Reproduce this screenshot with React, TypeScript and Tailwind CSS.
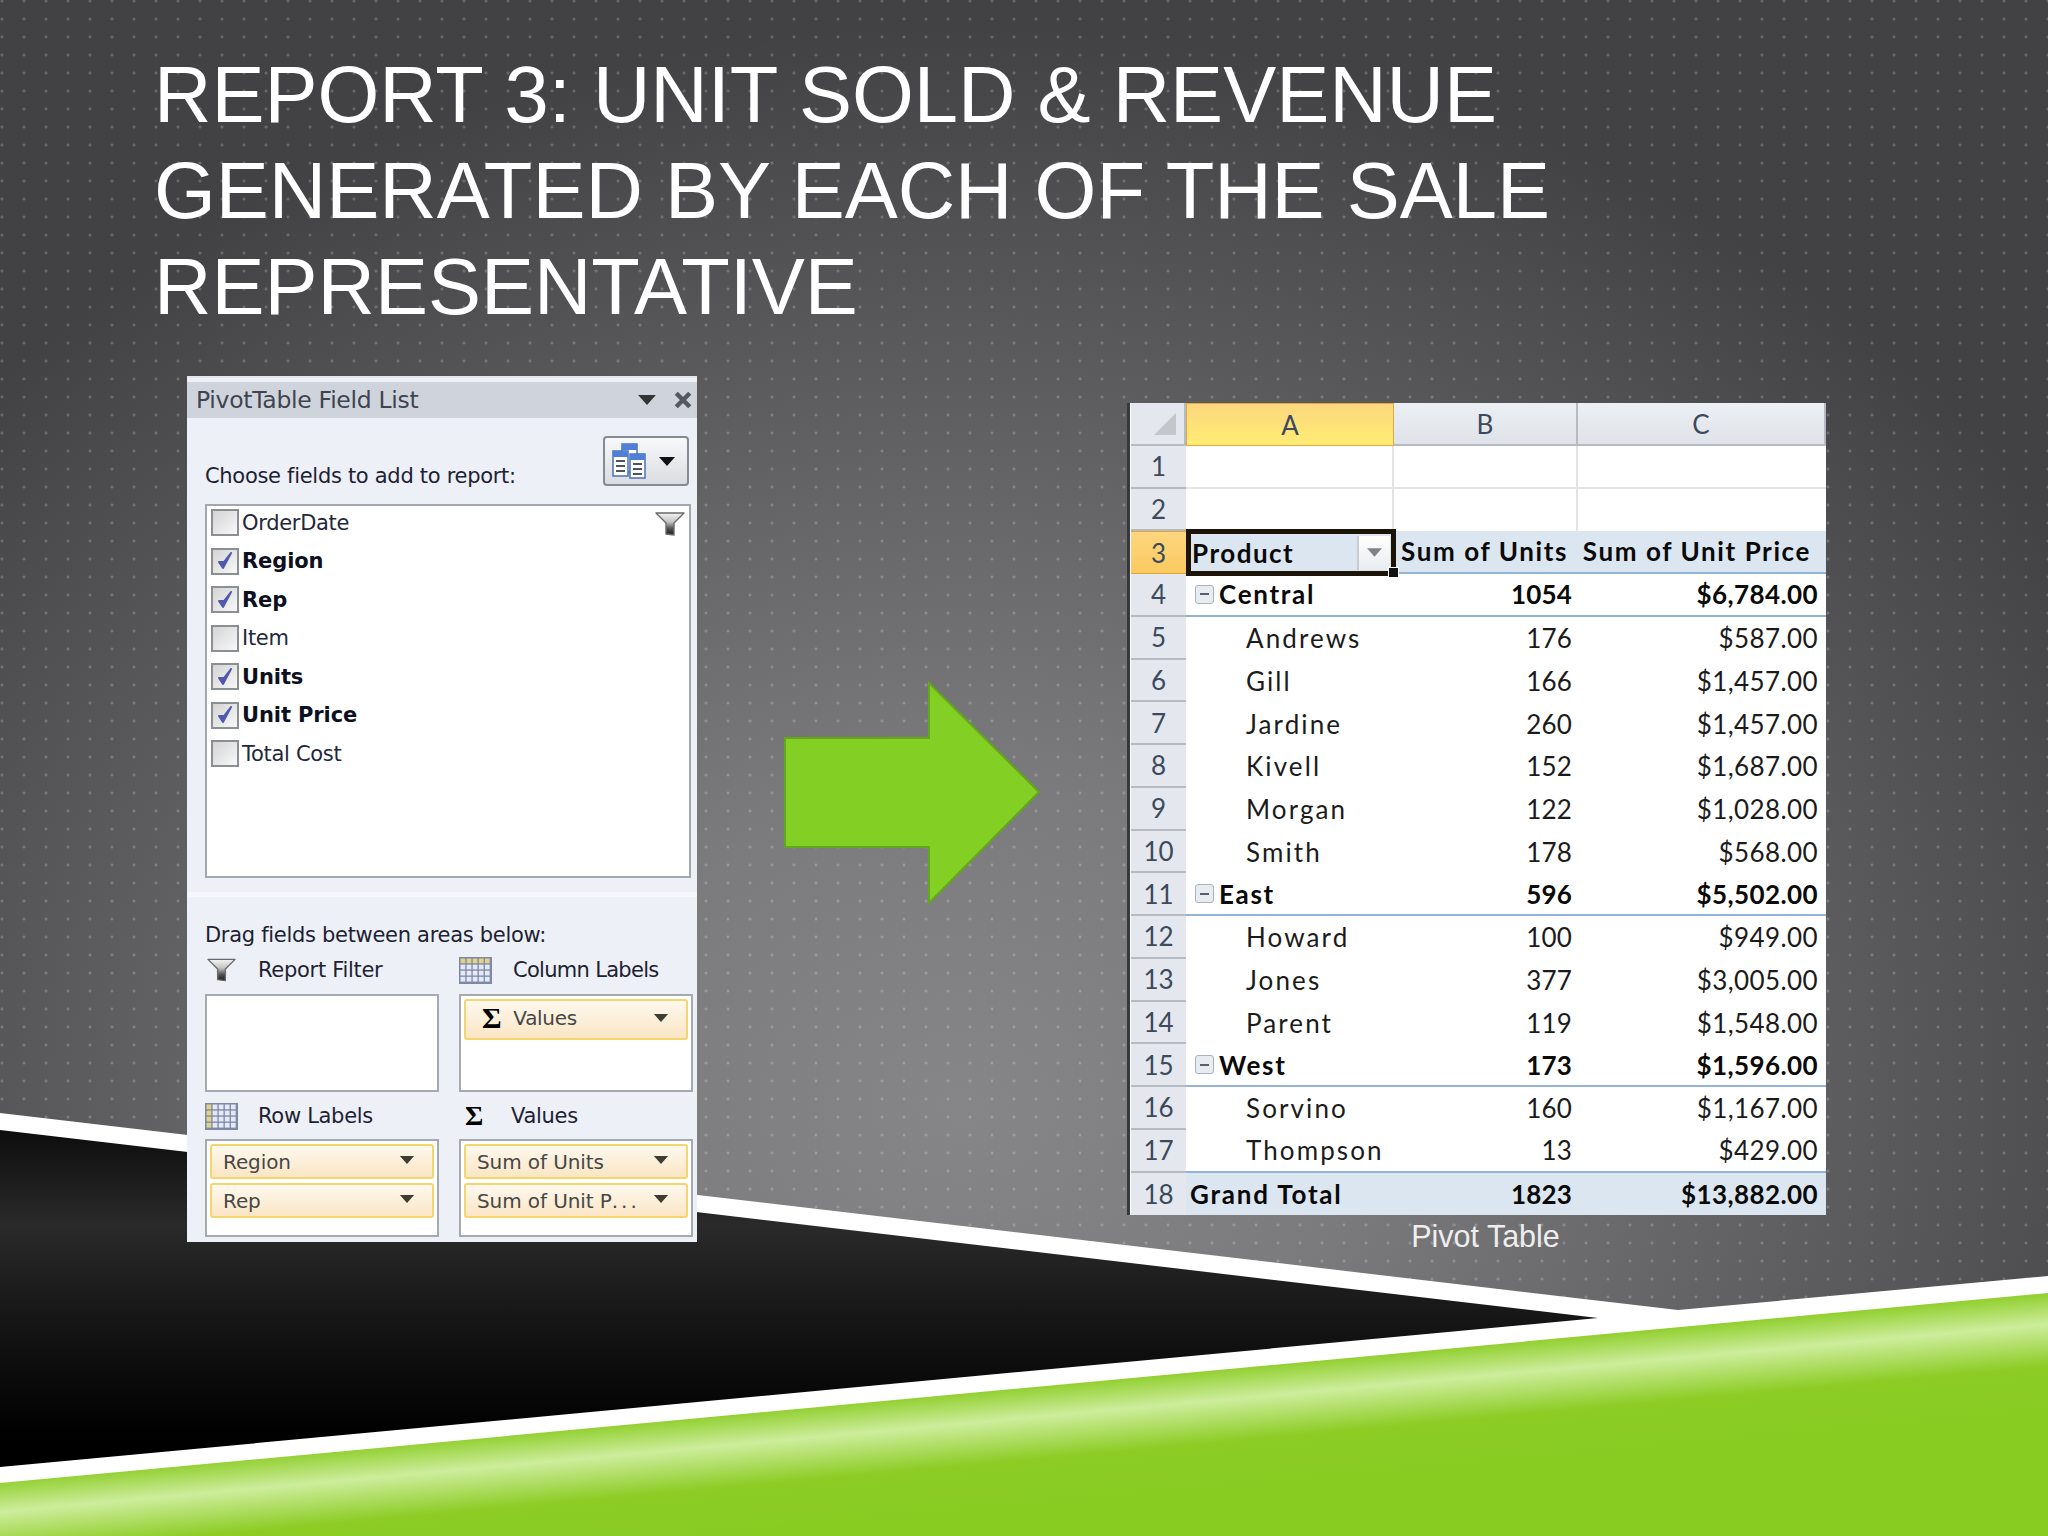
const rows = [
  { n: 4, label: 'Central', units: '1054', price: '$6,784.00', group: true },
  { n: 5, label: 'Andrews', units: '176', price: '$587.00' },
  { n: 6, label: 'Gill', units: '166', price: '$1,457.00' },
  { n: 7, label: 'Jardine', units: '260', price: '$1,457.00' },
  { n: 8, label: 'Kivell', units: '152', price: '$1,687.00' },
  { n: 9, label: 'Morgan', units: '122', price: '$1,028.00' },
  { n: 10, label: 'Smith', units: '178', price: '$568.00' },
  { n: 11, label: 'East', units: '596', price: '$5,502.00', group: true },
  { n: 12, label: 'Howard', units: '100', price: '$949.00' },
  { n: 13, label: 'Jones', units: '377', price: '$3,005.00' },
  { n: 14, label: 'Parent', units: '119', price: '$1,548.00' },
  { n: 15, label: 'West', units: '173', price: '$1,596.00', group: true },
  { n: 16, label: 'Sorvino', units: '160', price: '$1,167.00' },
  { n: 17, label: 'Thompson', units: '13', price: '$429.00' },
]

const fields = [
  { name: 'OrderDate', on: false },
  { name: 'Region', on: true },
  { name: 'Rep', on: true },
  { name: 'Item', on: false },
  { name: 'Units', on: true },
  { name: 'Unit Price', on: true },
  { name: 'Total Cost', on: false },
]

function Funnel({ className }: { className: string }) {
  return (
    <svg viewBox="0 0 30 24" className={className}>
      <defs>
        <linearGradient id="funnel" x1="0" x2="0" y1="0" y2="1">
          <stop offset="0" stopColor="#f4f4f4" />
          <stop offset="0.4" stopColor="#c4c4c4" />
          <stop offset="0.7" stopColor="#555" />
          <stop offset="1" stopColor="#1c1c1c" />
        </linearGradient>
      </defs>
      <path d="M1 1h28L19 11v12l-8 -1v-11z" fill="url(#funnel)" stroke="#6a6a6a" strokeWidth="1.4" strokeLinejoin="round" />
    </svg>
  )
}

function GridIcon({ className, rowHead }: { className: string; rowHead?: boolean }) {
  const cells = []
  for (let r = 0; r < 4; r++) {
    for (let c = 0; c < 5; c++) {
      const head = rowHead ? c === 0 : r === 0
      cells.push(
        <rect key={`${r}-${c}`} x={1.5 + c * 6.1} y={1.5 + r * 6.1} width="4.8" height="4.8" fill={head ? '#e2d28a' : '#e3e9f8'} />
      )
    }
  }
  return (
    <svg viewBox="0 0 33 27" className={className}>
      <rect x="0" y="0" width="33" height="27" fill="#7d88a3" />
      {cells}
    </svg>
  )
}

function Caret({ className = 'w-[16px] h-[9px]', color = '#3d3d33' }: { className?: string; color?: string }) {
  return (
    <svg viewBox="0 0 16 9" className={className}>
      <path d="M0 0h16L8 9z" fill={color} />
    </svg>
  )
}

function Check({ on }: { on: boolean }) {
  return (
    <span className="relative flex h-[27px] w-[28px] shrink-0 items-center justify-center border-2 border-[#8b8f93] bg-gradient-to-br from-[#d4d4d4] to-[#f8f8f8]">
      {on && (
        <svg viewBox="0 0 20 20" className="h-[20px] w-[20px]">
          <path d="M4 11l4 6 8-15-7 9z" fill="#5059ad" stroke="#5059ad" strokeWidth="2" strokeLinejoin="round" />
        </svg>
      )}
    </span>
  )
}

function Chip({ children }: { children: React.ReactNode }) {
  return (
    <div className="flex h-[35px] items-center justify-between rounded-[3px] border-2 border-[#f3d66e] bg-gradient-to-b from-[#fdf8ee] to-[#fbe6c4] pl-[11px] pr-[17px] text-[20px] tracking-[-0.1px] text-[#474747]">
      <span className="whitespace-nowrap">{children}</span>
      <Caret className="mb-[3px] h-[8px] w-[16px]" />
    </div>
  )
}

function AreaBox({ children }: { children?: React.ReactNode }) {
  return (
    <div className="flex h-[98px] w-[234px] flex-col gap-[4px] border-2 border-[#a6a9ae] bg-white p-[3px]">{children}</div>
  )
}

function FieldList() {
  return (
    <div className="relative flex h-[866px] w-[510px] shrink-0 flex-col border-t-[2px] border-[#e4e6ea] bg-[#edf0f6] font-['DejaVu_Sans',sans-serif] text-[21px] tracking-[-0.3px] text-[#1d2233]">
      <div className="mt-[4px] flex h-[36px] items-center justify-between bg-[#cfd4dc] pl-[9px] pr-[5px] text-[#3f4450]">
        <span className="mt-[2px] text-[23.5px]">PivotTable Field List</span>
        <div className="flex items-center gap-[17px]">
          <Caret className="h-[10px] w-[20px]" color="#333" />
          <svg viewBox="0 0 16 16" className="h-[18px] w-[18px]">
            <path d="M2 2l12 12M14 2L2 14" stroke="#55595f" strokeWidth="4" />
          </svg>
        </div>
      </div>

      <div className="flex h-[86px] items-start justify-between pl-[18px] pr-[8px] pt-[18px]">
        <span className="mt-[26px] leading-[28px]">Choose fields to add to report:</span>
        <div className="flex h-[50px] w-[86px] items-center gap-[13px] rounded-[4px] border-2 border-[#858b92] bg-gradient-to-b from-[#f8f9fb] to-[#d9dce0] pl-[7px]">
          <svg viewBox="0 0 34 36" className="h-[36px] w-[34px]">
            <rect x="10" y="1" width="15" height="28" fill="#fff" stroke="#4a70b8" strokeWidth="1.5" />
            <rect x="10" y="1" width="15" height="6" fill="#4f7fd8" />
            <rect x="1" y="8" width="15" height="25" fill="#fff" stroke="#4a70b8" strokeWidth="1.5" />
            <rect x="1" y="8" width="15" height="6" fill="#4f7fd8" />
            <rect x="18" y="11" width="15" height="24" fill="#fff" stroke="#4a70b8" strokeWidth="1.5" />
            <rect x="18" y="11" width="15" height="6" fill="#4f7fd8" />
            <path d="M4 18h9M4 23h9M4 28h9M21 21h9M21 26h9M21 31h9" stroke="#4d5560" strokeWidth="2" />
          </svg>
          <Caret className="h-[9px] w-[16px]" color="#111" />
        </div>
      </div>

      <div className="relative mx-[18px] h-[374px] w-[486px] border-2 border-[#a3a8ae] bg-white pl-[4px] pt-[3px] text-[#23283a]">
        <Funnel className="absolute right-[4px] top-[6px] h-[24px] w-[30px]" />
        <div className="flex flex-col gap-[11.5px]">
          {fields.map((f) => (
            <div key={f.name} className="flex h-[27px] items-center gap-[3px]">
              <Check on={f.on} />
              <span className={f.on ? 'mt-[2px] font-bold tracking-[-0.1px] text-[#0c1020]' : 'mt-[2px]'}>{f.name}</span>
            </div>
          ))}
        </div>
      </div>

      <div className="mt-[14px] h-[5px] bg-[#f6f7fa]" />

      <div className="flex flex-1 flex-col pl-[18px]">
        <p className="mt-[25px] leading-[26px]">Drag fields between areas below:</p>
        <div className="mt-[8px] grid w-[488px] grid-cols-[234px_234px] gap-x-[20px]">
          <div className="flex h-[28px] items-center gap-[22px] pl-[2px]">
            <Funnel className="h-[24px] w-[29px]" />
            <span className="mt-[2px]">Report Filter</span>
          </div>
          <div className="flex h-[28px] items-center gap-[21px]">
            <GridIcon className="h-[27px] w-[33px]" />
            <span className="mt-[2px] tracking-[-0.7px]">Column Labels</span>
          </div>
          <div className="mt-[10px]">
            <AreaBox />
          </div>
          <div className="mt-[10px]">
            <AreaBox>
              <div className="flex h-[41px] items-center justify-between rounded-[3px] border-2 border-[#f3d66e] bg-gradient-to-b from-[#fdf8ee] to-[#fbe6c4] pb-[4px] pr-[17px] text-[20px] text-[#474747]">
                <span className="flex items-center">
                  <span className="ml-[16px] font-['Liberation_Serif',serif] text-[30px] font-bold leading-none text-black">Σ</span>
                  <span className="ml-[12px]">Values</span>
                </span>
                <Caret className="h-[8px] w-[16px]" />
              </div>
            </AreaBox>
          </div>
          <div className="mt-[10px] flex h-[28px] items-center gap-[20px]">
            <GridIcon rowHead className="h-[27px] w-[33px]" />
            <span className="mt-[1px]">Row Labels</span>
          </div>
          <div className="mt-[10px] flex h-[28px] items-center gap-[28px] pl-[6px]">
            <span className="font-['Liberation_Serif',serif] text-[28px] font-bold leading-none text-black">Σ</span>
            <span className="mt-[1px]">Values</span>
          </div>
          <div className="mt-[9px]">
            <AreaBox>
              <Chip>Region</Chip>
              <Chip>Rep</Chip>
            </AreaBox>
          </div>
          <div className="mt-[9px]">
            <AreaBox>
              <Chip>Sum of Units</Chip>
              <Chip>
                Sum of Unit P<span className="tracking-[3px]">...</span>
              </Chip>
            </AreaBox>
          </div>
        </div>
      </div>
    </div>
  )
}

const rowHeadClass =
  'flex items-center justify-center border-b-2 border-[#b7bbc1] bg-[#e4e8ee] text-[#3b4a5c]'

function PivotRow({ n, label, units, price, group }: { n: number; label: string; units: string; price: string; group?: boolean }) {
  const line = group || n === 17 ? 'border-b-2 border-[#95b3d7]' : ''
  const weight = group ? 'font-bold text-[#0a0a0a]' : ''
  return (
    <>
      <div className={rowHeadClass}>{n}</div>
      <div className={`flex items-center bg-white ${line} ${weight} ${group ? 'pl-[9px] tracking-[1.7px]' : 'pl-[60px] tracking-[2.1px]'}`}>
        {group && (
          <span className="mr-[5px] flex h-[19px] w-[19px] items-center justify-center rounded-[3px] border border-[#a9b3bf] bg-[#e8ebf0]">
            <span className="h-[2px] w-[9px] bg-[#56606c]" />
          </span>
        )}
        {label}
      </div>
      <div className={`flex items-center justify-end bg-white pr-[6px] tracking-[0.2px] ${line} ${weight}`}>{units}</div>
      <div className={`flex items-center justify-end bg-white pr-[8px] tracking-[0.4px] ${line} ${weight}`}>{price}</div>
    </>
  )
}

function PivotTable() {
  return (
    <div className="ml-[86px] mt-[27px] flex w-[699px] shrink-0 flex-col">
      <div className="grid grid-cols-[55px_208px_184px_248px] auto-rows-[42.75px] border-l-[3px] border-[#37383b] bg-white pl-[1px] font-['Lato',sans-serif] text-[26px] leading-none text-[#1b1b1b]">
        <div className="flex items-end justify-end border-b-2 border-r-2 border-[#b7bbc1] bg-[#e4e8ee] pb-[9px] pr-[8px]">
          <svg viewBox="0 0 22 22" className="h-[22px] w-[22px]">
            <path d="M22 0v22H0z" fill="#c3c7cc" />
          </svg>
        </div>
        <div className="flex items-center justify-center border-[1.5px] border-[#e5a93e] bg-gradient-to-b from-[#fcd77e] to-[#ffec74] pt-[2px] text-[#3b4a5c]">A</div>
        <div className="flex items-center justify-center border-b-2 border-r-2 border-[#b7bbc1] bg-gradient-to-b from-[#eceff3] to-[#dfe3e9] pt-[2px] text-[#3b4a5c]">B</div>
        <div className="flex items-center justify-center border-b-2 border-r-2 border-[#b7bbc1] bg-gradient-to-b from-[#eceff3] to-[#dfe3e9] pt-[2px] text-[#3b4a5c]">C</div>

        <div className={rowHeadClass}>1</div>
        <div className="border-b-2 border-r-2 border-[#e2e4e7]" />
        <div className="border-b-2 border-r-2 border-[#e2e4e7]" />
        <div className="border-b-2 border-[#e2e4e7]" />
        <div className={rowHeadClass}>2</div>
        <div className="border-r-2 border-[#e2e4e7]" />
        <div className="border-r-2 border-[#e2e4e7]" />
        <div />

        <div className="flex items-center justify-center border-y border-[#e0a63c] bg-gradient-to-b from-[#fcd77e] to-[#fbc95f] text-[#3b4a5c]">3</div>
        <div className="relative z-10 -my-[2px] -mr-[2px] flex items-center justify-between border-[5px] border-[#1c1409] bg-[#dce6f1] pl-[1px] font-bold tracking-[1.5px] text-[#0a0a0a]">
          Product
          <span className="mr-[1px] flex h-[34px] w-[33px] items-center justify-center border-l-2 border-[#c6ccd4] bg-gradient-to-b from-white to-[#e9ecf0]">
            <Caret className="h-[9px] w-[15px]" color="#7f8388" />
          </span>
          <span className="absolute -bottom-[7px] -right-[8px] h-[11px] w-[11px] border border-white bg-[#111]" />
        </div>
        <div className="flex items-center justify-end border-b-2 border-[#95b3d7] bg-[#dce6f1] pb-[2px] pr-[10px] font-bold tracking-[1.6px] text-[#0a0a0a]">Sum of Units</div>
        <div className="flex items-center justify-end border-b-2 border-[#95b3d7] bg-[#dce6f1] pb-[2px] pr-[15px] font-bold tracking-[1.6px] text-[#0a0a0a]">Sum of Unit Price</div>

        {rows.map((r) => (
          <PivotRow key={r.n} {...r} />
        ))}

        <div className="flex items-center justify-center bg-[#e4e8ee] text-[#3b4a5c]">18</div>
        <div className="flex items-center bg-[#dce6f1] pl-[4px] font-bold tracking-[1.8px] text-[#0a0a0a]">Grand Total</div>
        <div className="flex items-center justify-end bg-[#dce6f1] pr-[6px] font-bold tracking-[0.2px] text-[#0a0a0a]">1823</div>
        <div className="flex items-center justify-end bg-[#dce6f1] pr-[8px] font-bold tracking-[0.4px] text-[#0a0a0a]">$13,882.00</div>
      </div>
      <p className="mt-[3px] pr-[2px] pl-[20px] text-center font-['Liberation_Sans',sans-serif] text-[30.5px] leading-[36px] text-[#eeeeee]">Pivot Table</p>
    </div>
  )
}

function Backdrop() {
  return (
    <div className="absolute inset-0 bg-[radial-gradient(ellipse_1300px_1080px_at_47%_72%,#868688_0%,#7b7b7d_30%,#5c5c5e_68%,#424244_100%)]">
      <div className="absolute inset-0 bg-[radial-gradient(circle,rgba(255,255,255,0.2)_1px,transparent_2px)] bg-[length:22px_18px] bg-[position:-9px_-8px]" />
      <svg viewBox="0 0 2048 1536" className="absolute inset-0 h-full w-full">
        <defs>
          <linearGradient id="blk" gradientUnits="userSpaceOnUse" x1="0" y1="1130" x2="0" y2="1470">
            <stop offset="0" stopColor="#0d0d0d" />
            <stop offset="0.28" stopColor="#2a2a2b" />
            <stop offset="0.55" stopColor="#161617" />
            <stop offset="0.9" stopColor="#000" />
          </linearGradient>
          <linearGradient id="grn" gradientUnits="userSpaceOnUse" x1="1000" y1="1390" x2="1011" y2="1510">
            <stop offset="0" stopColor="#93d032" />
            <stop offset="0.25" stopColor="#cdeD9c" />
            <stop offset="0.6" stopColor="#8ccc24" />
            <stop offset="1" stopColor="#88cc22" />
          </linearGradient>
        </defs>
        <polygon points="0,1113 1678,1310 2048,1276 2048,1536 0,1536" fill="#fff" />
        <polygon points="0,1130 1598,1318 0,1467" fill="url(#blk)" />
        <polygon points="0,1483 2048,1293 2048,1536 0,1536" fill="url(#grn)" />
      </svg>
    </div>
  )
}

export default function App() {
  return (
    <div className="relative h-[1536px] w-[2048px] overflow-hidden">
      <Backdrop />
      <div className="relative">
        <h1 className="pl-[154px] pt-[47px] font-['Liberation_Sans',sans-serif] text-[79.5px] font-normal uppercase leading-[96px] text-white">
          Report 3: Unit Sold &amp; Revenue
          <br />
          Generated by each of the sale
          <br />
          representative
        </h1>
        <div className="mt-[41px] flex items-start pl-[187px]">
          <FieldList />
          <svg viewBox="0 0 257 224" className="ml-[87px] mt-[305px] h-[224px] w-[257px] shrink-0">
            <path d="M1 57h144V2l110 109-110 111v-56H1z" fill="#84cf23" stroke="#62a818" strokeWidth="2" />
          </svg>
          <PivotTable />
        </div>
      </div>
    </div>
  )
}
